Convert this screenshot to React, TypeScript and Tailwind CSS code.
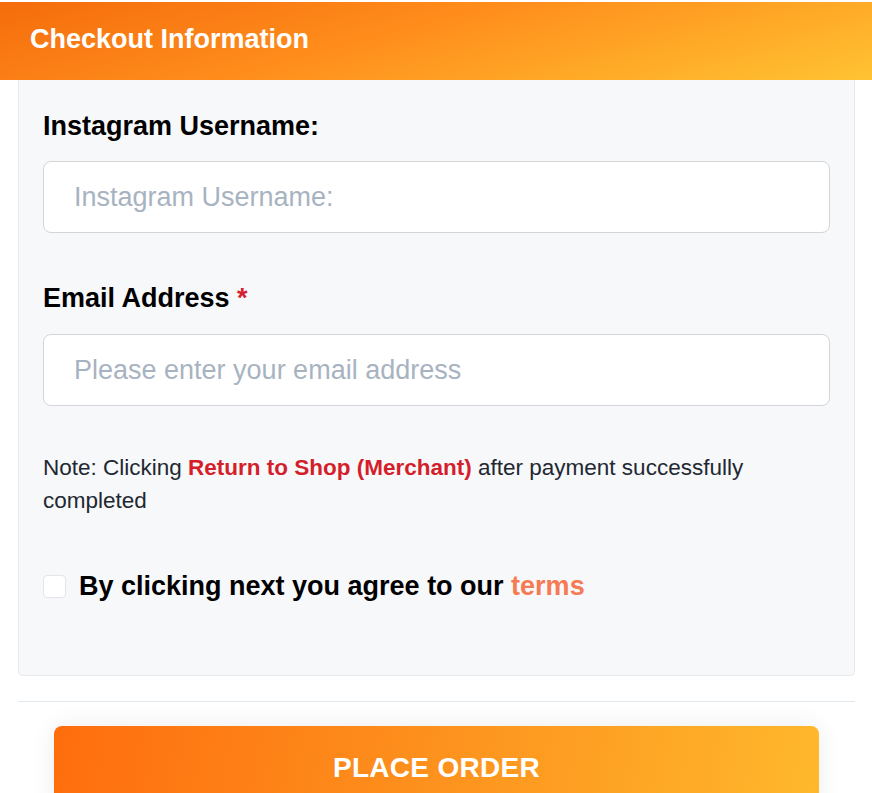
import React, { useState } from "react";

export default function App() {
  const [username, setUsername] = useState("");
  const [email, setEmail] = useState("");
  const [agreed, setAgreed] = useState(false);

  return (
    <div className="min-h-[793px] bg-white font-['Liberation_Sans',Arial,sans-serif] pt-[2px]">
      {/* header */}
      <div className="h-[78px] flex items-center px-[30px] pb-[4px] bg-[linear-gradient(165deg,#f56c0c_0%,#ff8e1c_45%,#ffc332_100%)]">
        <h1 className="text-white font-bold text-[27px]">Checkout Information</h1>
      </div>

      {/* form card */}
      <div className="ml-[18px] mr-[17px] bg-[#f7f8fa] border border-t-0 border-[#e6e8ec] rounded-b-[5px] px-[24px] pt-[32px] pb-[74px]">
        <label className="block text-[27px] leading-[28px] font-bold text-black mb-[21px]">
          Instagram Username:
        </label>
        <input
          value={username}
          onChange={(e) => setUsername(e.target.value)}
          placeholder="Instagram Username:"
          className="w-full h-[72px] bg-white border border-[#d3d5d9] rounded-[8px] px-[30px] text-[27px] text-gray-800 placeholder:text-[#a8b3c1] outline-none"
        />

        <label className="block mt-[51px] text-[27px] leading-[28px] font-bold text-black mb-[22px]">
          Email Address <span className="text-[#d4202f]">*</span>
        </label>
        <input
          value={email}
          onChange={(e) => setEmail(e.target.value)}
          placeholder="Please enter your email address"
          className="w-full h-[72px] bg-white border border-[#d3d5d9] rounded-[8px] px-[30px] text-[27px] text-gray-800 placeholder:text-[#a8b3c1] outline-none"
        />

        <p className="mt-[45px] text-[22.5px] leading-[33px] text-[#222831]">
          Note: Clicking <b className="text-[#d41f2b]">Return to Shop (Merchant)</b> after payment successfully completed
        </p>

        <label className="mt-[54px] flex items-center gap-[13px] cursor-pointer">
          <input
            type="checkbox"
            checked={agreed}
            onChange={(e) => setAgreed(e.target.checked)}
            className="appearance-none w-[23px] h-[23px] bg-white border border-[#e3e5e9] rounded-[4px] checked:bg-orange-500"
          />
          <span className="text-[27px] leading-[30px] font-bold text-black">
            By clicking next you agree to our <span className="text-[#f57b55]">terms</span>
          </span>
        </label>
      </div>

      <div className="ml-[18px] mr-[17px] mt-[25px] border-t border-[#e2e8f0]" />

      <div className="pl-[54px] pr-[53px] pt-[24px]">
        <button className="w-full h-[84px] rounded-[8px] text-white font-bold text-[28px] tracking-[0.3px] bg-[linear-gradient(100deg,#ff6d0d_0%,#fd8e1c_45%,#ffb82c_100%)] shadow-[0_0_24px_rgba(0,0,0,0.08)]">
          PLACE ORDER
        </button>
      </div>
    </div>
  );
}
